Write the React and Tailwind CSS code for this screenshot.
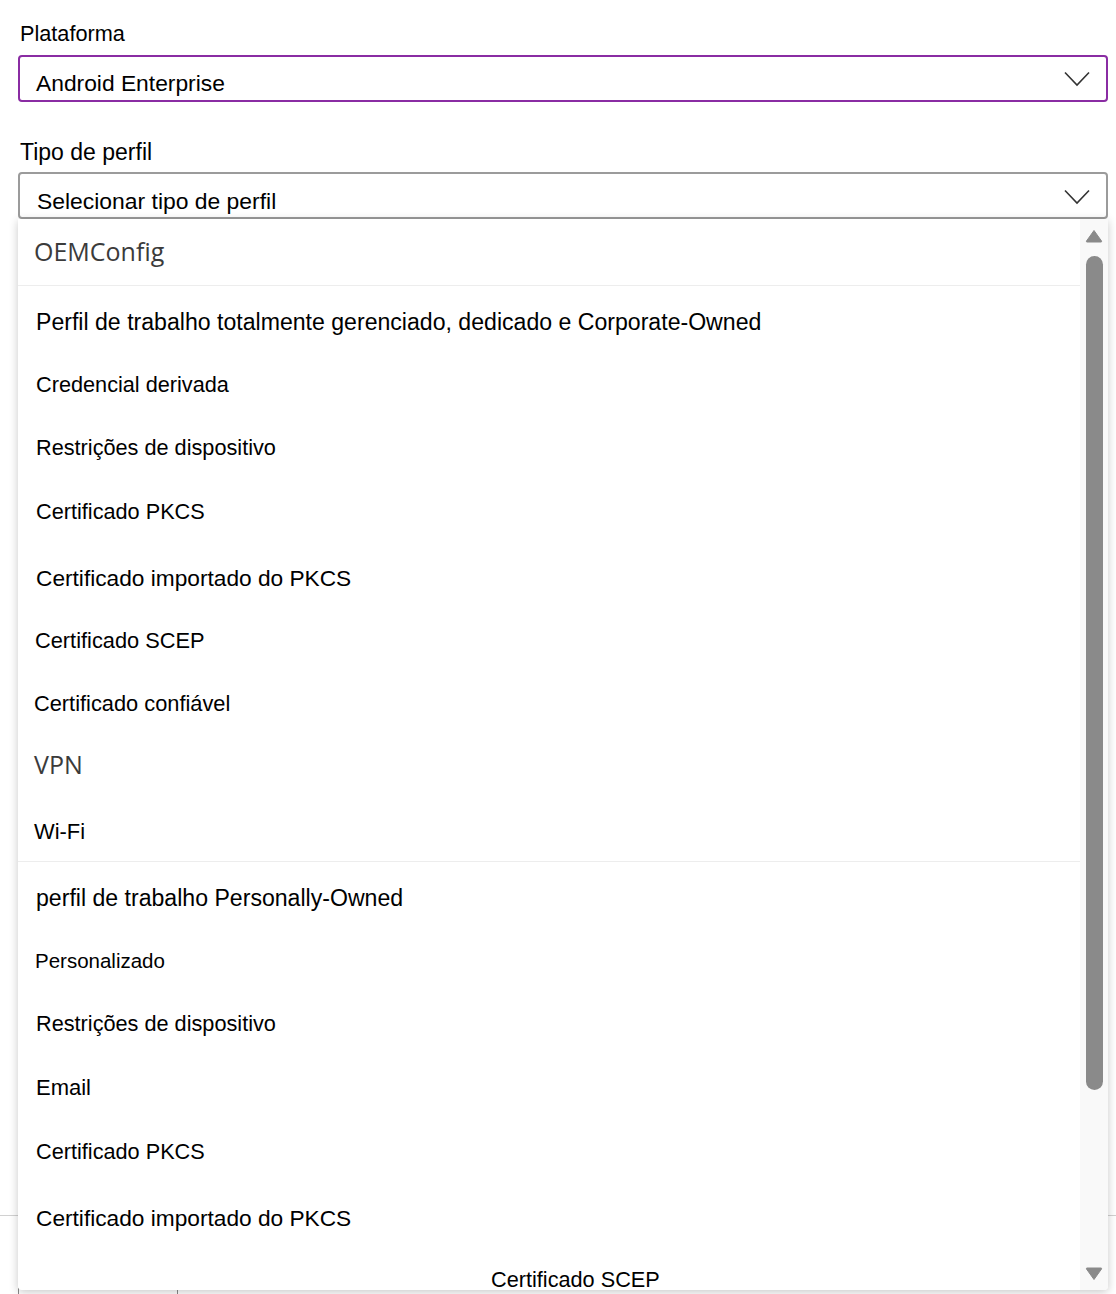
import React from 'react';

// mt = gap above each line (lines are 26px tall)
const items = [
    { label: 'OEMConfig', header: true },
    { divider: true },
    { label: 'Perfil de trabalho totalmente gerenciado, dedicado e Corporate-Owned', size: 'text-[23.1px]', pad: 'pl-[18px]', mt: 'mt-[23px]' },
    { label: 'Credencial derivada', size: 'text-[21.7px]', pad: 'pl-[18px]', mt: 'mt-[37px]' },
    { label: 'Restrições de dispositivo', size: 'text-[21.7px]', pad: 'pl-[18px]', mt: 'mt-[37px]' },
    { label: 'Certificado PKCS', size: 'text-[21.7px]', pad: 'pl-[18px]', mt: 'mt-[38px]' },
    { label: 'Certificado importado do PKCS', size: 'text-[22.7px]', pad: 'pl-[18px]', mt: 'mt-[40px]' },
    { label: 'Certificado SCEP', size: 'text-[21.8px]', pad: 'pl-[17px]', mt: 'mt-[37px]' },
    { label: 'Certificado confiável', size: 'text-[21.8px]', pad: 'pl-[16px]', mt: 'mt-[37px]' },
    { label: 'VPN', header: true, mt: 'mt-[34px]' },
    { label: 'Wi-Fi', size: 'text-[21.9px]', pad: 'pl-[16px]', mt: 'mt-[42px]' },
    { divider: true, mt: 'mt-[16px]' },
    { label: 'perfil de trabalho Personally-Owned', size: 'text-[23.1px]', pad: 'pl-[18px]', mt: 'mt-[23px]' },
    { label: 'Personalizado', size: 'text-[20.5px]', pad: 'pl-[17px]', mt: 'mt-[37px]' },
    { label: 'Restrições de dispositivo', size: 'text-[21.7px]', pad: 'pl-[18px]', mt: 'mt-[37px]' },
    { label: 'Email', size: 'text-[22px]', pad: 'pl-[18px]', mt: 'mt-[38px]' },
    { label: 'Certificado PKCS', size: 'text-[21.7px]', pad: 'pl-[18px]', mt: 'mt-[38px]' },
    { label: 'Certificado importado do PKCS', size: 'text-[22.7px]', pad: 'pl-[18px]', mt: 'mt-[40px]' },
    { label: 'Certificado SCEP', size: 'text-[21.7px]', pad: 'pl-[473px]', mt: 'mt-[36px]' },
];

const Chevron = () => (
    <svg width="26" height="16" viewBox="0 0 26 16" fill="none" className="shrink-0">
        <path d="M1 1.5 L13 14 L25 1.5" stroke="#333" strokeWidth="1.6" />
    </svg>
);

const Triangle = ({ down }) => (
    <svg width="18" height="14" viewBox="0 0 18 14" className={down ? 'rotate-180' : ''}>
        <path d="M9 1.5 L16.5 12 Q17 13 16 13 L2 13 Q1 13 1.5 12 Z" fill="#8a8a8a" stroke="#8a8a8a" strokeWidth="1" strokeLinejoin="round" />
    </svg>
);

export default function App() {
    return (
        <div className="relative w-[1116px] h-[1294px] overflow-hidden bg-white text-black font-['Liberation_Sans',Arial,sans-serif]">
            <div className="pl-[18px] pr-[8px]">
                <div className="pt-[21px] pl-[2px] text-[21.7px] leading-[26px]">Plataforma</div>
                <div className="mt-[8px] h-[47px] border-2 border-[#8a2ca3] rounded-[4px] flex items-start">
                    <div className="pt-[13px] pl-[16px] text-[22.8px] leading-[26px]">Android Enterprise</div>
                    <div className="ml-auto mr-[16px] mt-[14px]"><Chevron /></div>
                </div>

                <div className="pt-[37px] pl-[2px] text-[23px] leading-[26px]">Tipo de perfil</div>
                <div className="relative mt-[7px]">
                    <div className="h-[47px] border-2 border-[#9b9b9b] rounded-[4px] flex items-start">
                        <div className="pt-[14px] pl-[17px] text-[22.9px] leading-[26px]">Selecionar tipo de perfil</div>
                        <div className="ml-auto mr-[16px] mt-[15px]"><Chevron /></div>
                    </div>

                    {/* open dropdown list */}
                    <div className="absolute z-10 left-0 top-full w-[1090px] h-[1071px] bg-white rounded-b-[4px] shadow-[0_2px_10px_rgba(0,0,0,0.22)] flex overflow-hidden">
                        <div className="flex-1 flex flex-col">
                            {items.map((it, i) => {
                                if (it.divider) return <div key={i} className={`h-[1px] shrink-0 bg-[#ededed] ${it.mt || ''}`} />;
                                if (it.header) {
                                    return (
                                        <div key={i} className={`shrink-0 flex items-center pl-[16px] text-[#3b3b3b] text-[25px] font-['Open_Sans',sans-serif] ${i === 0 ? 'h-[66px]' : 'h-[26px] leading-[26px]'} ${it.mt || ''}`}>
                                            {it.label}
                                        </div>
                                    );
                                }
                                return (
                                    <div key={i} className={`shrink-0 h-[26px] leading-[26px] flex items-center whitespace-nowrap ${it.size} ${it.pad} ${it.mt}`}>
                                        {it.label}
                                    </div>
                                );
                            })}
                        </div>
                        <div className="w-[28px] shrink-0 bg-[#f9f9f9] flex flex-col items-center pt-[10px] pb-[9px]">
                            <Triangle />
                            <div className="mt-[13px] w-[17px] h-[834px] rounded-full bg-[#8a8a8a]" />
                            <div className="mt-auto"><Triangle down /></div>
                        </div>
                    </div>
                </div>
            </div>

            {/* page content below the overlay */}
            <div className="mt-[996px] border-t border-[#d1d1d1]" />
            <div className="mt-[71px] ml-[18px] w-[160px] h-[30px] border border-[#8a8a8a] rounded-[2px]" />
        </div>
    );
}
